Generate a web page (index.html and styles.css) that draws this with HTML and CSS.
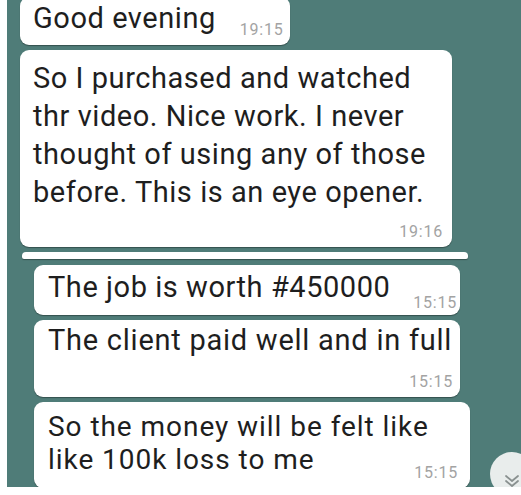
FILE: index.html
```html
<!DOCTYPE html>
<html>
<head>
<meta charset="utf-8">
<link rel="stylesheet" href="styles.css">
</head>
<body>
<div class="screen">
  <div class="group group-top">
    <div class="bubble b1">
      <span class="txt">Good evening</span>
      <span class="time">19:15</span>
    </div>
    <div class="bubble b2 col">
      <div class="txt">So I purchased and watched<br>thr video. Nice work. I never<br>thought of using any of those<br>before. This is an eye opener.</div>
      <div class="time">19:16</div>
    </div>
  </div>
  <div class="seam"></div>
  <div class="group group-bottom">
    <div class="bubble b3">
      <span class="txt">The job is worth #450000</span>
      <span class="time">15:15</span>
    </div>
    <div class="bubble b4 col">
      <div class="txt">The client paid well and in full</div>
      <div class="time">15:15</div>
    </div>
    <div class="bubble b5">
      <div class="txt">So the money will be felt like<br>like 100k loss to me</div>
      <div class="time">15:15</div>
    </div>
  </div>
  <div class="scroll-btn">
    <svg width="16" height="14" viewBox="0 0 16 14"><path d="M2 2 L8 7 L14 2 M2 7 L8 12 L14 7" fill="none" stroke="#8a9190" stroke-width="1.8" stroke-linecap="round" stroke-linejoin="round"/></svg>
  </div>
</div>
</body>
</html>
```
FILE: styles.css
```css
html, body {
  margin: 0;
  padding: 0;
  background: #ffffff;
}
body {
  font-family: Roboto, "Noto Sans", sans-serif;
  color: #1e1e1e;
}
.screen {
  position: relative;
  margin-left: 7px;
  width: 514px;
  height: 487px;
  background: #4f7c78;
  overflow: hidden;
}
.group {
  display: flex;
  flex-direction: column;
  align-items: flex-start;
  gap: 5px;
}
.group-top {
  padding-left: 13px;
  margin-top: -3px;
}
.group-bottom {
  padding-left: 27px;
}
.bubble {
  background: #ffffff;
  border-radius: 9px;
  box-shadow: 0 1px 1px rgba(0, 0, 0, 0.35);
  display: flex;
  align-items: flex-end;
  box-sizing: border-box;
}
.bubble.col {
  flex-direction: column;
  align-items: stretch;
}
.txt {
  white-space: nowrap;
  font-size: 29px;
  letter-spacing: 0.55px;
}
.time {
  font-size: 16px;
  line-height: 16px;
  letter-spacing: 0.8px;
  color: #a3a3a3;
  text-align: right;
}
.b1 {
  padding: 4px 6px 7.5px 13px;
}
.b1 .txt {
  line-height: 34px;
  margin-bottom: 2.5px;
}
.b1 .time {
  margin-left: 24px;
}
.b2 {
  width: 432px;
  padding: 8.6px 9px 7.5px 13px;
}
.b2 .txt {
  line-height: 38px;
}
.b2 .time {
  margin-top: 13px;
}
.seam {
  margin: 5px 0 6px 15px;
  width: 446px;
  height: 7px;
  background: #ffffff;
  border-radius: 4px 4px 2px 2px;
  box-shadow: 0 1px 1px rgba(0, 0, 0, 0.35);
}
.b3 {
  width: 426px;
  padding: 7px 3px 4.5px 14px;
}
.b3 .txt {
  line-height: 30px;
  margin-bottom: 8.5px;
}
.b3 .time {
  margin-left: auto;
}
.b4 {
  width: 426px;
  padding: 5px 7px 7.5px 14px;
}
.b4 .txt {
  line-height: 30px;
  letter-spacing: 0.75px;
}
.b4 .time {
  margin-top: 18.5px;
}
.b5 {
  display: grid;
  width: 436px;
  padding: 8px 12px 7.5px 14px;
}
.b5 .txt,
.b5 .time {
  grid-area: 1 / 1;
}
.b5 .txt {
  font-size: 28px;
  letter-spacing: 0.95px;
  line-height: 33px;
  margin-bottom: 4.5px;
}
.b5 .time {
  justify-self: end;
  align-self: end;
}
.scroll-btn {
  position: absolute;
  left: 483px;
  top: 452px;
  width: 44px;
  height: 44px;
  border-radius: 50%;
  background: #e9edec;
  display: flex;
  justify-content: center;
  padding-top: 22px;
  box-sizing: border-box;
}
```
